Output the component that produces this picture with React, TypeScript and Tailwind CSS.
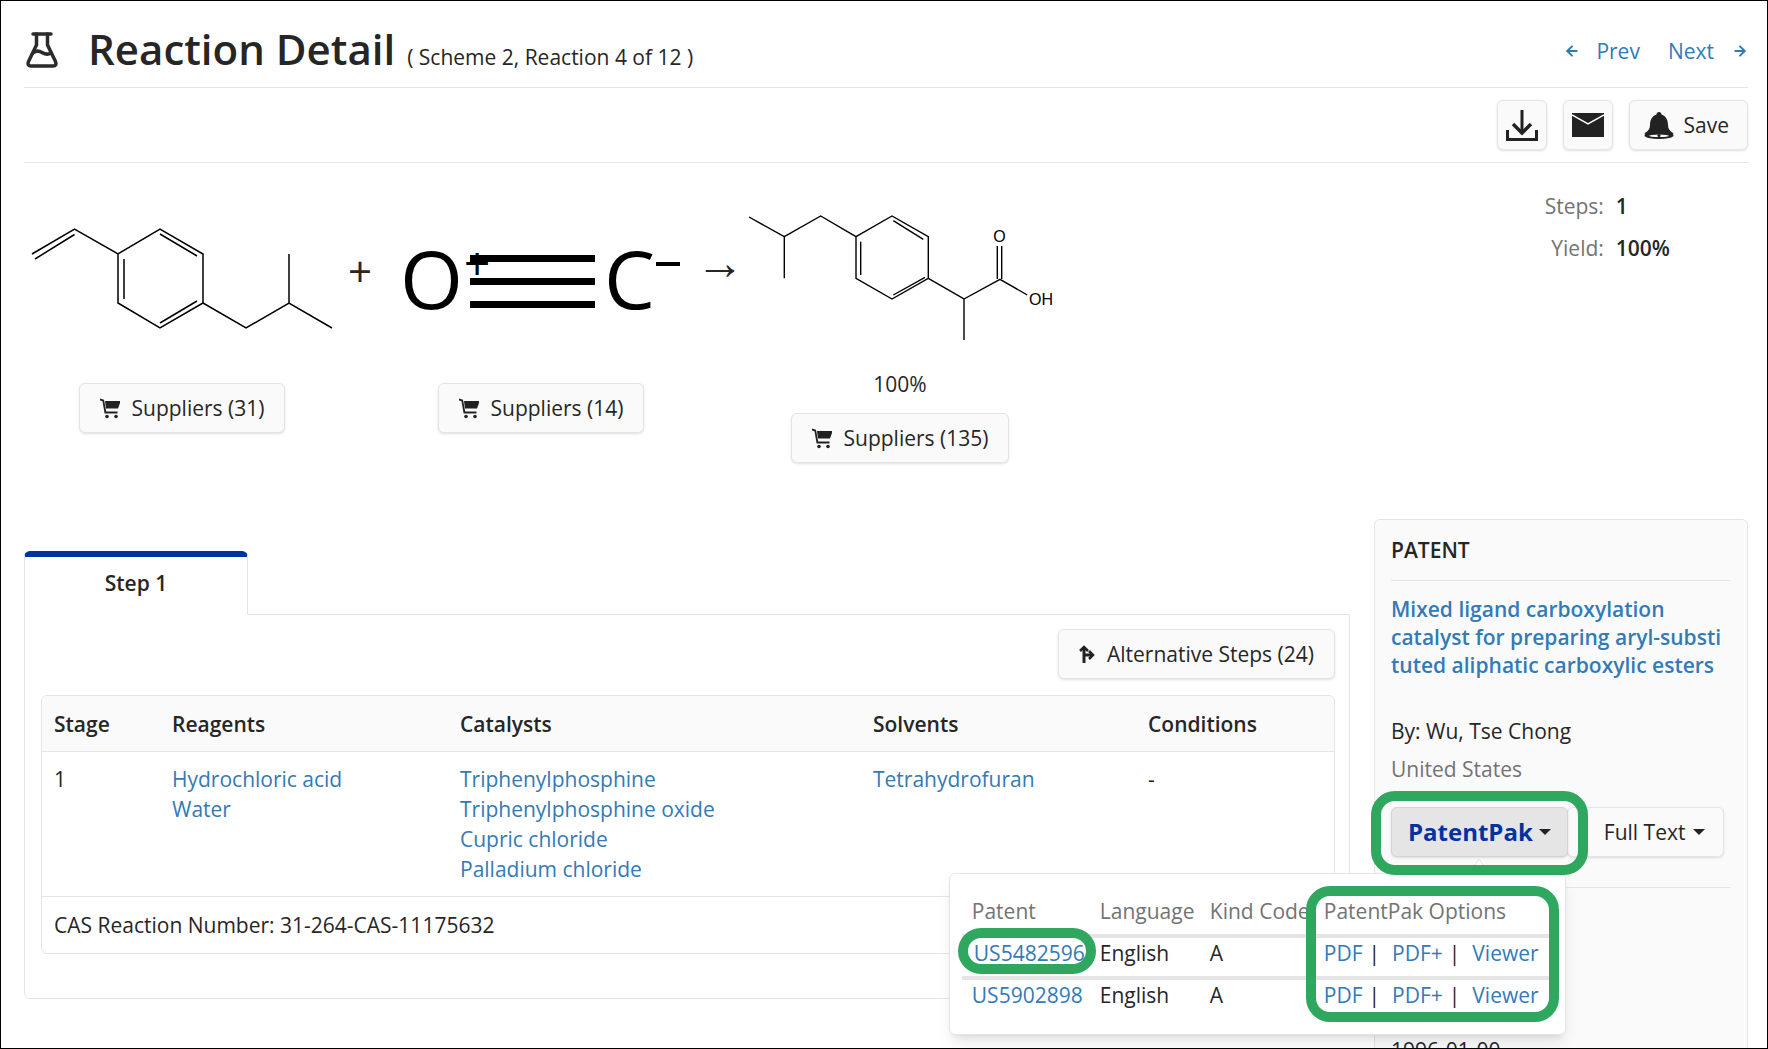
import { ArrowLeft, ArrowRight } from "lucide-react";

const btn =
  "flex items-center rounded-md border border-neutral-200 bg-neutral-50 text-[21px] leading-7 text-neutral-800 shadow-sm";
const link = "text-[#337ab7]";

function FlaskIcon() {
  return (
    <svg width="32" height="36" viewBox="0 0 32 36" fill="none" stroke="#2b2b2b" strokeWidth="3.5" strokeLinecap="round" strokeLinejoin="round">
      <path d="M7 2H25" />
      <path d="M10.5 2V13L2.5 29.5Q1 34 5 34H27Q31 34 29.5 29.5L21.5 13V2" />
      <path d="M7 21Q11 17.5 16 20.5T25 21" />
    </svg>
  );
}

function CartIcon() {
  return (
    <svg width="20" height="21" viewBox="0 0 20 21" fill="#222">
      <path d="M0 0.5L4 1.8L6.2 13.5H17.5V15.5H4.6L2.5 3.2L0 2.4Z" />
      <path d="M5 3H20V5L18 10.5H6Z" />
      <circle cx="7" cy="18.5" r="1.8" />
      <circle cx="16" cy="18.5" r="1.8" />
    </svg>
  );
}

function BranchIcon() {
  return (
    <svg width="16" height="18" viewBox="0 0 16 18" fill="none" stroke="#222" strokeWidth="3">
      <path d="M5 18V2" />
      <path d="M1 6L5 2L9 6" strokeWidth="2.5" />
      <path d="M5 10H13" />
      <path d="M10 6L14 10L10 14" strokeWidth="2.5" />
    </svg>
  );
}

function DownloadIcon() {
  return (
    <svg width="32" height="31" viewBox="0 0 32 31" fill="none" stroke="#222" strokeWidth="3">
      <path d="M16 0V23" />
      <path d="M7 14L16 23L25 14" strokeWidth="3.5" />
      <path d="M1.5 20V29.5H30.5V20" />
    </svg>
  );
}

function MailIcon() {
  return (
    <svg width="32" height="24" viewBox="0 0 32 24">
      <rect width="32" height="24" fill="#222" />
      <path d="M0 2L16 11L32 2" fill="none" stroke="#fff" strokeWidth="1.5" />
    </svg>
  );
}

function BellIcon() {
  return (
    <svg width="30" height="27" viewBox="0 0 30 27" fill="#222">
      <path d="M15 0C16.5 0 17.5 1 17.5 2.5C22 4 24 8 24 13C24 17 26 19 29 21C30 22 29 23 28 23H2C1 23 0 22 1 21C4 19 6 17 6 13C6 8 8 4 12.5 2.5C12.5 1 13.5 0 15 0Z" />
      <ellipse cx="15" cy="23.5" rx="14.5" ry="3.5" />
      <ellipse cx="15" cy="23.8" rx="10" ry="1.3" fill="#fff" />
      <circle cx="15" cy="23.5" r="1.6" />
    </svg>
  );
}

function Caret() {
  return (
    <svg width="12" height="6" viewBox="0 0 12 6" fill="#222">
      <path d="M0 0H12L6 6Z" />
    </svg>
  );
}

function Bonds({ d, thin }: { d: string; thin?: boolean }) {
  return <path d={d} fill="none" stroke="#000" strokeWidth={thin ? 1.4 : 1.5} />;
}

function StyreneMolecule() {
  return (
    <svg width="300" height="100" viewBox="0 0 300 100" className="overflow-visible">
      <Bonds d="M0 25L42.5 0L86 25L128 0L171 25V74L128 99L86 74V25" />
      <Bonds d="M171 74L214 99L257 74L300 99M257 74V25" />
      <Bonds d="M128 5L165 27M165 72L128 94M92 30V70M3 30L42.5 5.5" />
    </svg>
  );
}

function CarbonMonoxide() {
  return (
    <svg width="306" height="100" viewBox="0 0 306 100" className="overflow-visible">
      <text x="12" y="80" fontSize="81" fontFamily="Open Sans, sans-serif" fill="#000">O</text>
      <text x="216" y="80" fontSize="81" fontFamily="Open Sans, sans-serif" fill="#000">C</text>
      <text x="76" y="51" fontSize="46" fontFamily="Open Sans, sans-serif" fill="#000">+</text>
      <rect x="82" y="26" width="125" height="7" />
      <rect x="82" y="49" width="125" height="7" />
      <rect x="82" y="72" width="125" height="7" />
      <rect x="268" y="33" width="24" height="4" />
    </svg>
  );
}

function IbuprofenMolecule() {
  return (
    <svg width="308" height="126" viewBox="0 0 308 126" className="overflow-visible">
      <Bonds d="M3 1L38.3 20.7V62.3M38.3 20.7L74.7 0L110 20.7L146 0L182.3 20.7V62.3L146 83L110 62.3V20.7" thin />
      <Bonds d="M182.3 62.3L218 83V124M218 83L254 63.3L281.3 79" thin />
      <Bonds d="M251.3 63V30M255.7 63V30" thin />
      <Bonds d="M147.3 4.7L177.3 23.3M179 61.3L147.3 79M114.7 25.7V59" thin />
      <text x="253.5" y="26" fontSize="16" textAnchor="middle" fontFamily="Liberation Sans, sans-serif">O</text>
      <text x="283" y="89" fontSize="16" fontFamily="Liberation Sans, sans-serif">OH</text>
    </svg>
  );
}

function Suppliers({ count }: { count: number }) {
  return (
    <button className={`${btn} gap-3 px-5 py-2.5`}>
      <CartIcon />
      Suppliers ({count})
    </button>
  );
}

function PatentRow({ id, first }: { id: string; first?: boolean }) {
  return (
    <div className="grid grid-cols-[128px_110px_114px_1fr] border-t-4 border-neutral-200 pb-2 pl-2.5">
      <div className="relative">
        {first && <div className="absolute -top-2.5 right-1 -bottom-1.5 -left-3.5 rounded-full border-[10px] border-[#2fa75f] bg-white" />}
        <a className={`relative z-10 ${first ? "pl-0.5" : ""} ${link}`}>{id}</a>
      </div>
      <div>English</div>
      <div>A</div>
      <div className="flex">
        <a className={link}>PDF</a>
        <span className="ml-1.5 mr-3">|</span>
        <a className={link}>PDF+</a>
        <span className="ml-1.5 mr-3">|</span>
        <a className={link}>Viewer</a>
      </div>
    </div>
  );
}

export default function App() {
  return (
    <div className="relative flex h-[1049px] w-[1768px] flex-col overflow-hidden bg-white pl-6 pr-5 font-['Open_Sans',sans-serif] text-[21px] leading-7.5 text-neutral-800 outline outline-black -outline-offset-1">
      {/* Header */}
      <div className="flex h-22 items-center justify-between border-b border-neutral-200 pt-3">
        <div className="flex items-baseline">
          <div className="ml-0.5 mr-7.5 self-center">
            <FlaskIcon />
          </div>
          <h1 className="text-[42px] font-semibold leading-tight">Reaction Detail</h1>
          <span className="ml-3">( Scheme 2, Reaction 4 of 12 )</span>
        </div>
        <div className={`flex items-center pt-0.5 ${link}`}>
          <ArrowLeft size={16} strokeWidth={3} />
          <span className="ml-4">Prev</span>
          <span className="ml-7">Next</span>
          <ArrowRight size={16} strokeWidth={3} className="ml-4.5" />
        </div>
      </div>

      {/* Toolbar */}
      <div className="flex justify-end gap-4 border-b border-neutral-200 py-3">
        <button className={`${btn} justify-center px-2 py-2`}>
          <DownloadIcon />
        </button>
        <button className={`${btn} justify-center px-2`}>
          <MailIcon />
        </button>
        <button className={`${btn} gap-2.5 py-2.5 pl-3.5 pr-4.5`}>
          <BellIcon />
          Save
        </button>
      </div>

      {/* Reaction scheme */}
      <div className="mb-14 flex items-start pl-2 pt-7">
        <div className="flex flex-col items-center">
          <div className="flex h-44 items-center">
            <StyreneMolecule />
          </div>
          <div className="mt-4">
            <Suppliers count={31} />
          </div>
        </div>
        <div className="flex h-44 w-14 items-center justify-center pb-4 text-[42px]">+</div>
        <div className="flex flex-col items-center">
          <div className="flex h-44 items-center">
            <CarbonMonoxide />
          </div>
          <div className="mt-4">
            <Suppliers count={14} />
          </div>
        </div>
        <div className="flex h-44 w-13 items-center justify-center pb-9 text-5xl">→</div>
        <div className="flex flex-col items-center">
          <div className="flex h-44 items-center">
            <IbuprofenMolecule />
          </div>
          <div className="mt-0.5">100%</div>
          <div className="mt-3.5">
            <Suppliers count={135} />
          </div>
        </div>
        <div className="ml-auto mr-19.5 grid grid-cols-[auto_auto] gap-x-3 gap-y-3">
          <div className="text-right text-neutral-500">Steps:</div>
          <div className="font-semibold">1</div>
          <div className="text-right text-neutral-500">Yield:</div>
          <div className="font-semibold">100%</div>
        </div>
      </div>

      <div className="flex min-h-0 flex-1 gap-6">
        {/* Step panel */}
        <div className="flex-1 pt-8">
          <div className="relative -mb-px flex h-16 w-56 items-center justify-center rounded-t-md border-x border-t-[6px] border-x-neutral-200 border-t-[#0033a0] bg-white pb-1.5 font-semibold">
            Step 1
          </div>
          <div className="rounded-b-md border border-neutral-200 pb-11 pl-4 pr-3.5 pt-3.5">
            <div className="flex justify-end">
              <button className={`${btn} gap-3 px-5 py-2.5`}>
                <BranchIcon />
                Alternative Steps (24)
              </button>
            </div>
            <div className="mt-4 rounded-md border border-neutral-200">
              <div className="grid h-14 grid-cols-[118px_288px_413px_275px_1fr] items-center rounded-t-md border-b border-neutral-200 bg-neutral-50 px-3 font-semibold">
                <div>Stage</div>
                <div>Reagents</div>
                <div>Catalysts</div>
                <div>Solvents</div>
                <div>Conditions</div>
              </div>
              <div className="grid grid-cols-[118px_288px_413px_275px_1fr] border-b border-neutral-200 px-3 py-3">
                <div>1</div>
                <div className={`flex flex-col ${link}`}>
                  <a>Hydrochloric acid</a>
                  <a>Water</a>
                </div>
                <div className={`flex flex-col ${link}`}>
                  <a>Triphenylphosphine</a>
                  <a>Triphenylphosphine oxide</a>
                  <a>Cupric chloride</a>
                  <a>Palladium chloride</a>
                </div>
                <div className={link}>Tetrahydrofuran</div>
                <div>-</div>
              </div>
              <div className="flex h-14 items-center px-3">CAS Reaction Number: 31-264-CAS-11175632</div>
            </div>
          </div>
        </div>

        {/* Patent sidebar */}
        <div className="w-[374px] rounded-t-md border border-neutral-200 bg-neutral-50 p-4">
          <div className="border-b border-neutral-200 pb-4 font-semibold leading-7">PATENT</div>
          <a className={`mt-3.5 block font-semibold leading-7 ${link}`}>
            Mixed ligand carboxylation
            <br />
            catalyst for preparing aryl-substi
            <br />
            tuted aliphatic carboxylic esters
          </a>
          <div className="mt-9.5 leading-7">By: Wu, Tse Chong</div>
          <div className="mt-2.5 leading-7 text-neutral-500">United States</div>
          <div className="mt-6 flex">
            <div className="relative">
              <button className="flex items-center gap-1.5 rounded-md border border-neutral-300 bg-neutral-200 px-4 py-2.5 shadow-sm">
                <span className="text-2xl font-bold leading-7 text-[#0033a0]">PatentPak</span>
                <Caret />
              </button>

              {/* Options popover */}
              <div className="absolute right-0.5 top-full z-10 mt-4 w-[617px] rounded-md border border-neutral-200 bg-white px-3 pb-4 pt-5.5 shadow-lg">
                <div className="grid grid-cols-[128px_110px_114px_1fr] pb-2 pl-2.5 text-neutral-500">
                  <div>Patent</div>
                  <div>Language</div>
                  <div className="whitespace-nowrap">Kind Code</div>
                  <div className="whitespace-nowrap">PatentPak Options</div>
                </div>
                <PatentRow id="US5482596" first />
                <PatentRow id="US5902898" />
                <div className="absolute bottom-3 left-89 right-1.5 top-3 z-20 rounded-3xl border-[10px] border-[#2fa75f]" />
              </div>

              <svg width="16" height="14" viewBox="0 0 16 14" className="absolute left-1/2 top-full z-10 -translate-x-1/2">
                <path d="M0 14L8 2L16 14Z" fill="#fff" />
                <path d="M0 14L8 2L16 14" fill="none" stroke="#e5e5e5" />
              </svg>
              <div className="absolute -inset-x-5 -top-4 -bottom-4.5 z-20 rounded-3xl border-[10px] border-[#2fa75f]" />
            </div>
            <button className={`${btn} -ml-px gap-2 py-2.5 pl-9 pr-4.5`}>
              Full Text
              <Caret />
            </button>
          </div>
          <div className="mt-7.5 border-t border-neutral-200 pt-37 leading-7">1996-01-00</div>
        </div>
      </div>
    </div>
  );
}
